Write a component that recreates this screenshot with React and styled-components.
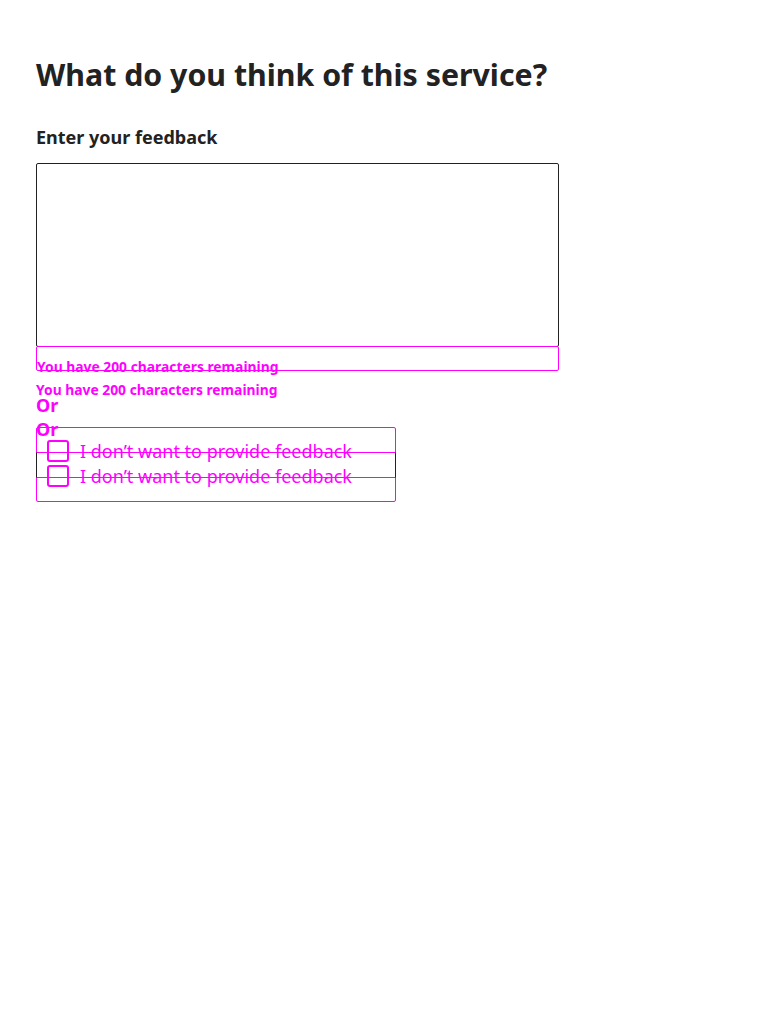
import React, { useState } from "react";
import styled, { createGlobalStyle } from "styled-components";

const MAX_CHARS = 200;

const GlobalStyle = createGlobalStyle`
  html,
  body {
    margin: 0;
    padding: 0;
    background: #ffffff;
  }

  body {
    font-family: "Noto Sans", "Open Sans", Arial, sans-serif;
    color: #222222;
  }
`;

const Page = styled.main`
  padding: 57px 36px 40px;
`;

const Heading = styled.h1`
  margin: 0;
  font-size: 30.3px;
  line-height: 36px;
  font-weight: 700;
  color: #222222;
`;

const Label = styled.label`
  display: block;
  margin-top: 32px;
  font-size: 18px;
  line-height: 24px;
  font-weight: 700;
  color: #222222;
`;

const TextArea = styled.textarea`
  display: block;
  box-sizing: border-box;
  width: 523px;
  height: 184px;
  margin: 14px 0 0;
  padding: 8px;
  border: 1px solid #222222;
  border-radius: 2px;
  font-family: inherit;
  font-size: 18px;
  resize: none;
  outline: none;
`;

/* magenta = the ghost outline of the comparison render */
const HintBox = styled.div`
  box-sizing: border-box;
  width: 523px;
  height: 25px;
  margin-top: -1px;
  padding-top: 10px;
  border: 1px solid #ff00ff;
  border-radius: 2px;
`;

const Hint = styled.p`
  margin: ${(p) => (p.$ghost ? "9px 0 0" : "0")};
  font-size: 13.85px;
  line-height: 20px;
  font-weight: 700;
  color: #ff00ff;
  white-space: nowrap;
`;

const Or = styled.p`
  margin: ${(p) => p.$top};
  font-size: 18px;
  line-height: 18px;
  font-weight: 700;
  color: #ff00ff;
`;

const Group = styled.fieldset`
  display: grid;
  width: 360px;
  margin: -11px 0 0;
  padding: 0;
  border: 0;
`;

const Outline = styled.div`
  grid-area: 1 / 1;
  box-sizing: border-box;
  height: 75px;
  border: 1px solid #ff00ff;
  border-radius: 2px;
`;

const OutlineRow = styled.div`
  box-sizing: border-box;
  height: 26px;
  margin: 24px -1px 0;
  border-top: 1px solid #ff00ff;
  border-bottom: 1px solid #ff00ff;
  border-left: 1px solid #222222;
  border-right: 1px solid #222222;
`;

const Options = styled.div`
  grid-area: 1 / 1;
  display: flex;
  flex-direction: column;
  gap: 3px;
  padding: 13px 0 0 11px;
`;

const Option = styled.label`
  display: flex;
  align-items: flex-start;
  gap: 11px;
  height: 22px;
  cursor: pointer;
`;

const Box = styled.span`
  box-sizing: border-box;
  flex: none;
  width: 22px;
  height: 22px;
  border: 2px solid #ff00ff;
  border-radius: 3px;
  background: ${(p) => (p.$checked ? "#ff00ff" : "transparent")};
`;

const OptionText = styled.span`
  font-size: 18px;
  line-height: 23px;
  color: #ff00ff;
  white-space: nowrap;
`;

const App = () => {
  const [text, setText] = useState("");
  const [declined, setDeclined] = useState(false);
  const remaining = MAX_CHARS - text.length;
  const hint = `You have ${remaining} characters remaining`;

  return (
    <Page>
      <GlobalStyle />
      <Heading>What do you think of this service?</Heading>
      <Label htmlFor="feedback">Enter your feedback</Label>
      <TextArea
        id="feedback"
        value={text}
        maxLength={MAX_CHARS}
        onChange={(e) => setText(e.target.value)}
      />
      <HintBox>
        <Hint>{hint}</Hint>
      </HintBox>
      <Hint $ghost>{hint}</Hint>
      <Or $top="-4px 0 0">Or</Or>
      <Or $top="6px 0 0">Or</Or>
      <Group>
        <Outline>
          <OutlineRow />
        </Outline>
        <Options>
          {[0, 1].map((i) => (
            <Option key={i} onClick={() => setDeclined(!declined)}>
              <Box $checked={declined} />
              <OptionText>I don’t want to provide feedback</OptionText>
            </Option>
          ))}
        </Options>
      </Group>
    </Page>
  );
};

export default App;
